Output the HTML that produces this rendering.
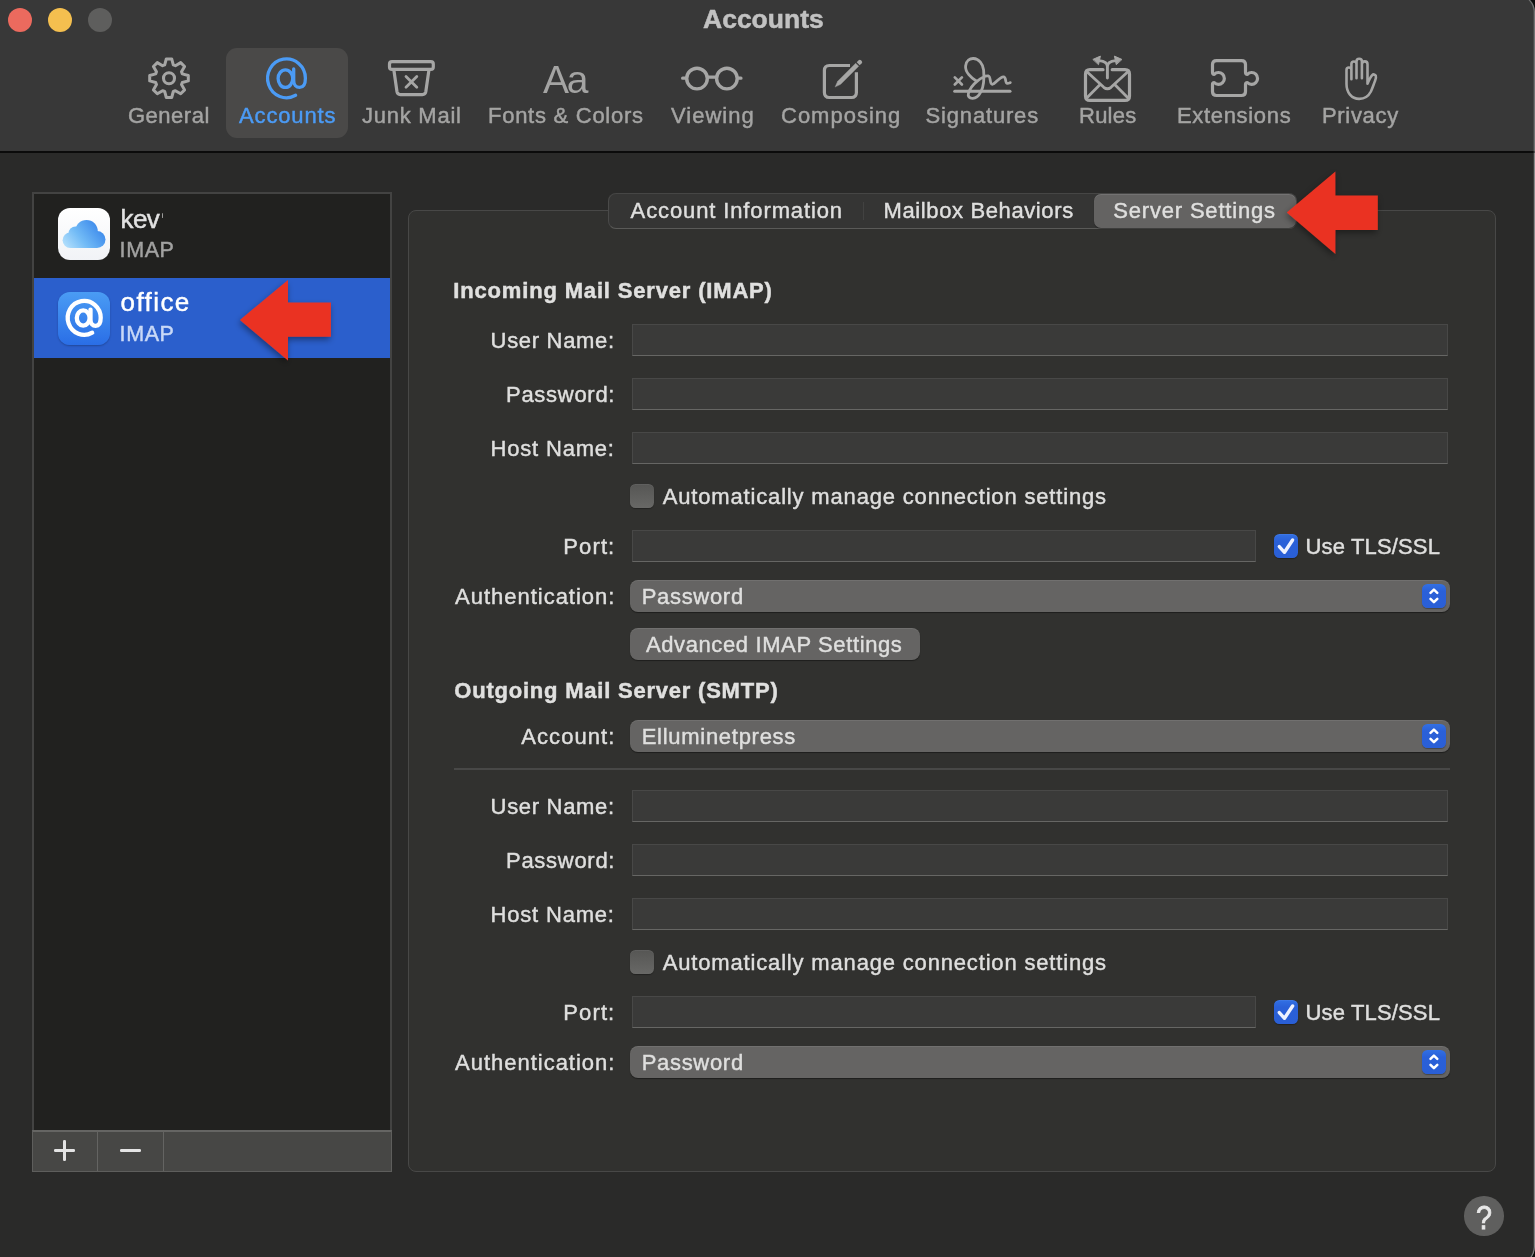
<!DOCTYPE html>
<html><head><meta charset="utf-8"><title>Accounts</title>
<style>
*{box-sizing:border-box;margin:0;padding:0}
html,body{width:1535px;height:1257px;overflow:hidden;background:#0c0c0c}
body{font-family:"Liberation Sans",sans-serif;color:#e4e4e4;font-size:22px;position:relative}
.a{position:absolute}
.t{position:absolute;white-space:pre;-webkit-text-stroke:.45px currentColor}
#win{position:absolute;left:-30px;top:-5px;width:1565px;height:1269px;background:#2a2a29;border-radius:0 17px 17px 0;overflow:hidden;box-shadow:inset -1px 0 0 #555}
#in{will-change:transform;position:absolute;left:30px;top:5px;width:1535px;height:1257px}
#tb{position:absolute;left:0;top:0;width:1535px;height:153px;background:#383838;border-bottom:2px solid #0b0b0b}
.tl{position:absolute;top:8px;width:24px;height:24px;border-radius:50%}
.fld{position:absolute;left:632px;width:816px;height:32px;background:#3a3a39;border:1px solid #484847;border-bottom-color:#666664}
.sel{position:absolute;left:630px;width:820px;height:32px;background:#656463;border-radius:8px;box-shadow:0 1px 1px rgba(0,0,0,.4),inset 0 1px 0 rgba(255,255,255,.08)}
.stp{position:absolute;left:1422px;width:24.4px;height:24.6px;border-radius:5.5px;background:linear-gradient(#3270e4,#2a60d8 30%,#2a5fd6);box-shadow:0 1px 1px rgba(0,0,0,.3)}
.cb{position:absolute;width:24.4px;height:24.4px;border-radius:5.5px;background:linear-gradient(#565654,#686866);box-shadow:0 1px 1px rgba(0,0,0,.3),inset 0 1px 0 rgba(255,255,255,.06)}
.cb.on{background:linear-gradient(#3270e4,#2a60d8 30%,#2a5fd6)}
.ns{-webkit-text-stroke:0}
.tt{-webkit-text-stroke:.5px currentColor}
.q{transform:scaleX(.87);transform-origin:0 0;-webkit-text-stroke:.8px currentColor}
.tb2{-webkit-text-stroke:.45px currentColor}
svg{position:absolute;overflow:visible}
</style></head><body>
<div id="win"><div id="in">
<div id="tb">
 <div class="tl" style="left:8px;background:#ec6a5e"></div>
 <div class="tl" style="left:48px;background:#f4bf4f"></div>
 <div class="tl" style="left:88px;background:#5e5e5d"></div>
 <div class="a" style="left:226px;top:48px;width:122px;height:90px;border-radius:11px;background:#4a4948"></div>
</div>

<!-- left list -->
<div class="a" style="left:32px;top:192px;width:360px;height:980px;background:#21211f;border:2px solid #434342"></div>
<div class="a" style="left:34px;top:278px;width:356px;height:80px;background:#2b5fcc"></div>
<div class="a" style="left:32px;top:1130px;width:360px;height:42px;background:#474745;border:1.6px solid #5e5e5c;border-top:2px solid #656563"></div>
<div class="a" style="left:96.5px;top:1131px;width:1.5px;height:40px;background:#646462"></div>
<div class="a" style="left:162.5px;top:1131px;width:1.5px;height:40px;background:#646462"></div>
<div class="a" style="left:53.8px;top:1149.3px;width:21px;height:2.5px;background:#e4e4e4;border-radius:1.2px"></div>
<div class="a" style="left:63.1px;top:1140px;width:2.5px;height:21px;background:#e4e4e4;border-radius:1.2px"></div>
<div class="a" style="left:119.9px;top:1149.3px;width:21.1px;height:2.5px;background:#e4e4e4;border-radius:1.2px"></div>

<!-- account icons -->
<div class="a" style="left:58px;top:208px;width:52px;height:52px;border-radius:12px;background:linear-gradient(#ffffff,#f1f3f6)"></div>
<div class="a" style="left:58px;top:292px;width:52px;height:53px;border-radius:12px;background:linear-gradient(#4a9cf4,#2a6ee6);box-shadow:0 1px 2px rgba(0,0,0,.25)"></div>

<div class="a" style="left:161.6px;top:213px;width:1.6px;height:4.5px;background:#9a9a99;border-radius:1px"></div>
<!-- panel -->
<div class="a" style="left:408px;top:210px;width:1088px;height:962px;background:#31312f;border:1.5px solid #484847;border-radius:8px"></div>
<!-- tabs -->
<div class="a" style="left:608px;top:193px;width:689px;height:36.4px;background:#353534;border:1.2px solid #4a4a49;border-top-color:#464645;border-bottom-color:#5a5a58;border-radius:8px"></div>
<div class="a" style="left:863px;top:202px;width:1px;height:18px;background:#424241"></div>
<div class="a" style="left:1094px;top:194px;width:201.6px;height:34px;background:#646362;border-radius:7px;box-shadow:0 1px 1px rgba(0,0,0,.35),inset 0 1px 0 rgba(255,255,255,.1)"></div>

<!-- incoming -->
<div class="fld" style="top:324px"></div>
<div class="fld" style="top:378px"></div>
<div class="fld" style="top:432px"></div>
<div class="cb" style="left:629.8px;top:483.8px"></div>
<div class="fld" style="top:530px;width:624px"></div>
<div class="cb on" style="left:1273.9px;top:533.9px"></div>
<div class="sel" style="top:580px"></div><div class="stp" style="top:583.8px"></div>
<div class="sel" style="top:628px;width:290px"></div>
<!-- outgoing -->
<div class="sel" style="top:720px"></div><div class="stp" style="top:723.8px"></div>
<div class="a" style="left:454px;top:768px;width:996px;height:2px;background:#484847"></div>
<div class="fld" style="top:790px"></div>
<div class="fld" style="top:844px"></div>
<div class="fld" style="top:898px"></div>
<div class="cb" style="left:629.8px;top:949.9px"></div>
<div class="fld" style="top:996px;width:624px"></div>
<div class="cb on" style="left:1273.9px;top:999.9px"></div>
<div class="sel" style="top:1046px"></div><div class="stp" style="top:1049.8px"></div>

<!-- help -->
<div class="a" style="left:1464.2px;top:1196.2px;width:39.5px;height:39.5px;border-radius:50%;background:#5f5f5e"></div>

<svg width="1535" height="1257" viewBox="0 0 1535 1257" style="left:0;top:0" fill="none" stroke-linecap="round" stroke-linejoin="round">
<path d="M164.7 64.9 L166.3 58.9 L171.7 58.9 L173.3 64.9 L175.4 65.7 L180.7 62.6 L184.6 66.5 L181.5 71.8 L182.3 73.9 L188.3 75.5 L188.3 80.9 L182.3 82.5 L181.5 84.6 L184.6 89.9 L180.7 93.8 L175.4 90.7 L173.3 91.5 L171.7 97.5 L166.3 97.5 L164.7 91.5 L162.6 90.7 L157.3 93.8 L153.4 89.9 L156.5 84.6 L155.7 82.5 L149.7 80.9 L149.7 75.5 L155.7 73.9 L156.5 71.8 L153.4 66.5 L157.3 62.6 L162.6 65.7Z" stroke="#a6a6a5" stroke-width="3" stroke-linejoin="round"/>
<circle cx="169" cy="78.2" r="5.5" stroke="#a6a6a5" stroke-width="3.1"/>
<path d="M295.6 95.3 A18.9 19.4 0 1 1 305.4 78.2 C305.4 84.5 303.0 87.4 299.6 87.4 C296.3 87.4 293.7 85.0 293.7 80.5 L293.7 68.9" stroke="#4b9bf5" stroke-width="3.3"/><ellipse cx="285.4" cy="78.6" rx="7.3" ry="8.8" stroke="#4b9bf5" stroke-width="3.3"/>
<rect x="389.5" y="61.6" width="43.8" height="7.8" rx="2.5" stroke="#a6a6a5" stroke-width="3.2"/>
<path d="M393.9 70.2 L397 91.8 Q397.5 94.6 400.3 94.6 H422.5 Q425.3 94.6 425.8 91.8 L428.9 70.2" stroke="#a6a6a5" stroke-width="3.2"/>
<path d="M406 76.4 L416.8 87.2 M416.8 76.4 L406 87.2" stroke="#a6a6a5" stroke-width="2.8"/>
<circle cx="697" cy="78.6" r="10.3" stroke="#a6a6a5" stroke-width="3.4"/><circle cx="726.9" cy="78.6" r="10.3" stroke="#a6a6a5" stroke-width="3.4"/>
<path d="M707.6 77.2 H716.1 M682.6 78.2 H686 M737.5 78.2 H741" stroke="#a6a6a5" stroke-width="3.2"/>
<path d="M850 65.5 H829.4 Q824.4 65.5 824.4 70.5 V92.5 Q824.4 97.5 829.4 97.5 H851.4 Q856.4 97.5 856.4 92.5 V72.3" stroke="#a6a6a5" stroke-width="3.2" stroke-linecap="butt"/>
<path d="M835.2 86.7 L837.7 81.2 L855.7 63.2 L858.7 66.2 L840.7 84.2 Z" fill="#a6a6a5" stroke="#a6a6a5" stroke-width=".4"/>
<path d="M856.7 62.2 L858.6 60.3 Q859.8 59.2 861 60.3 L861.7 61 Q862.8 62.2 861.7 63.3 L859.7 65.2 Z" fill="#a6a6a5" stroke="none"/>
<path d="M954.7 91.3 H1010 " stroke="#a6a6a5" stroke-width="3"/>
<path d="M954.8 77.4 L961.9 84.5 M961.9 77.4 L954.8 84.5" stroke="#a6a6a5" stroke-width="2.7"/>
<path d="M977 81.5 C971 78 965 72 965.6 66 C966.2 60.5 970 58.3 973.5 58.5 C979 58.8 983 64 983.6 70 C984.2 77 984 86 981 91.7 C978.5 96.5 975.5 98.5 972.5 98.4 C969.5 98.3 967.6 96.5 968.4 93.5 C969.5 89.5 973 84.5 977 81.3 C980.5 78.5 985.5 75.5 988.5 76 C991 76.5 989.5 84.5 992.3 84.3 C995.5 84 999 77 1003.5 76.8 C1006.5 76.7 1004.8 83.2 1007.3 83.3 C1008.6 83.3 1009.5 82.9 1010.3 82.6" stroke="#a6a6a5" stroke-width="2.8"/>
<path d="M1103 69.7 H1090 Q1085.5 69.7 1085.5 74.2 V95.9 Q1085.5 100.4 1090 100.4 H1125 Q1129.5 100.4 1129.5 95.9 V74.2 Q1129.5 69.7 1125 69.7 H1112.2" stroke="#a6a6a5" stroke-width="3.2"/>
<path d="M1087.2 72 L1103.8 87.3 Q1107.4 90.3 1111 87.3 L1127.6 72 M1087.2 97.6 L1099.6 85 M1127.6 97.6 L1115.2 85" stroke="#a6a6a5" stroke-width="2.8"/>
<path d="M1107.4 78 V66.5 C1107.4 62.5 1103.5 61 1099 60.6 M1107.4 66.5 C1107.4 62.5 1111.3 61 1115.8 60.6" stroke="#a6a6a5" stroke-width="2.9"/>
<path d="M1093.2 59.3 L1100.4 56.1 L1098.6 64.3 Z M1121.6 59.3 L1114.4 56.1 L1116.2 64.3 Z" fill="#a6a6a5" stroke="#a6a6a5" stroke-width="1"/>
<path d="M1212.5 72.3 V64.6 Q1212.5 60.6 1216.5 60.6 H1241.5 Q1245.5 60.6 1245.5 64.6 V72.3 Q1245.5 74.3 1247.4 74.3 A5.9 5.9 0 1 1 1247.4 82.5 Q1245.5 82.5 1245.5 84.5 V91.5 Q1245.5 95.5 1241.5 95.5 H1216.5 Q1212.5 95.5 1212.5 91.5 V84.5 Q1212.5 82.5 1214.2 82.5 A5.9 5.9 0 1 0 1214.2 74.3 Q1212.5 74.3 1212.5 72.3 Z" stroke="#a6a6a5" stroke-width="3.2"/>
<path d="M1346.5 84 V70 a2.45 2.45 0 0 1 4.9 0 M1351.4 79.3 V64 a2.55 2.55 0 0 1 5.1 0 V78.3 M1356.5 64 V61.4 a2.7 2.7 0 0 1 5.4 0 V78.3 M1361.9 64.2 a2.8 2.8 0 0 1 5.6 0 V83.7 C1368.8 80.5 1370.5 77 1372 75.3 C1373.3 73.9 1375.2 74.2 1375.8 75.8 C1376.3 77.2 1375.8 79 1375 81 C1373.6 84.5 1372.5 88 1370.9 91.5 C1368.8 95.6 1364.5 98.9 1359.2 98.9 C1351.5 98.9 1346.5 92.5 1346.5 84" stroke="#a6a6a5" stroke-width="2.6"/>
<defs><linearGradient id="cg" x1="0" y1="0" x2="1" y2="1"><stop offset="0" stop-color="#8fd0fb"/><stop offset="1" stop-color="#2f7fe6"/></linearGradient><linearGradient id="cg2" x1="0" y1="1" x2="1" y2="0"><stop offset="0" stop-color="#9ad6fb"/><stop offset=".6" stop-color="#4d9cf0"/><stop offset="1" stop-color="#2c78e4"/></linearGradient></defs>
<defs><linearGradient id="cg3" gradientUnits="userSpaceOnUse" x1="64" y1="250" x2="100" y2="222"><stop offset="0" stop-color="#bde5fd"/><stop offset=".45" stop-color="#72bbf6"/><stop offset="1" stop-color="#3684ea"/></linearGradient></defs>
<g fill="url(#cg3)" stroke="none"><circle cx="70.3" cy="240.3" r="7.7"/><circle cx="75.5" cy="233.5" r="7"/><circle cx="86.5" cy="231.3" r="11.3"/><circle cx="97" cy="239.6" r="8.5"/><rect x="70.3" y="236" width="26.7" height="12"/></g>
<path d="M92.2 332.7 A16.5 17.0 0 1 1 100.7 317.7 C100.7 323.2 98.6 325.8 95.7 325.8 C92.8 325.8 90.5 323.6 90.5 319.7 L90.5 309.6" stroke="#ffffff" stroke-width="4.3"/><ellipse cx="83.2" cy="318.0" rx="6.4" ry="7.7" stroke="#ffffff" stroke-width="4.3"/>
<path d="M1279.3 546.6 L1284.5 552.3 L1292.6 540" stroke="#eef2ff" stroke-width="3.4"/>
<path d="M1279.3 1012.6 L1284.5 1018.3 L1292.6 1006" stroke="#eef2ff" stroke-width="3.4"/>
<path d="M1430.5 592.8 L1433.9 589.6 L1437.3 592.8 M1430.5 598.8 L1433.9 602.2 L1437.3 598.8" stroke="#fff" stroke-width="2.5"/>
<path d="M1430.5 732.8 L1433.9 729.6 L1437.3 732.8 M1430.5 738.8 L1433.9 742.2 L1437.3 738.8" stroke="#fff" stroke-width="2.5"/>
<path d="M1430.5 1058.8 L1433.9 1055.6 L1437.3 1058.8 M1430.5 1064.8 L1433.9 1068.2 L1437.3 1064.8" stroke="#fff" stroke-width="2.5"/>
<defs><filter id="sh" x="-20%" y="-20%" width="140%" height="150%"><feDropShadow dx="-1" dy="3" stdDeviation="3" flood-color="#000" flood-opacity=".4"/></filter></defs>
<path d="M239.9 319.9 L288 279.9 V302.6 H330.9 V336.8 H288 V360.4 Z" fill="#ea3323" stroke="none" filter="url(#sh)"/>
<path d="M1286.8 212.6 L1335.4 171.4 V195.4 H1377.8 V230 H1335.4 V254.1 Z" fill="#ea3323" stroke="none" filter="url(#sh)"/>
</svg>
<div class="t tt" style="left:703.0px;top:2.0px;font-size:26.5px;line-height:34px;letter-spacing:0.00px;color:#c2c2c2;font-weight:700">Accounts</div>
<div class="t tb2" style="left:128.0px;top:101.4px;font-size:22px;line-height:29px;letter-spacing:0.50px;color:#a4a4a3">General</div>
<div class="t tb2" style="left:239.0px;top:101.4px;font-size:22px;line-height:29px;letter-spacing:0.86px;color:#4b9bf5">Accounts</div>
<div class="t tb2" style="left:362.0px;top:101.4px;font-size:22px;line-height:29px;letter-spacing:0.75px;color:#a4a4a3">Junk Mail</div>
<div class="t tb2" style="left:488.0px;top:101.4px;font-size:22px;line-height:29px;letter-spacing:0.73px;color:#a4a4a3">Fonts &amp; Colors</div>
<div class="t tb2" style="left:671.0px;top:101.4px;font-size:22px;line-height:29px;letter-spacing:1.00px;color:#a4a4a3">Viewing</div>
<div class="t tb2" style="left:781.0px;top:101.4px;font-size:22px;line-height:29px;letter-spacing:1.00px;color:#a4a4a3">Composing</div>
<div class="t tb2" style="left:925.6px;top:101.4px;font-size:22px;line-height:29px;letter-spacing:0.82px;color:#a4a4a3">Signatures</div>
<div class="t tb2" style="left:1079.0px;top:101.4px;font-size:22px;line-height:29px;letter-spacing:0.25px;color:#a4a4a3">Rules</div>
<div class="t tb2" style="left:1177.0px;top:101.4px;font-size:22px;line-height:29px;letter-spacing:0.67px;color:#a4a4a3">Extensions</div>
<div class="t tb2" style="left:1322.0px;top:101.4px;font-size:22px;line-height:29px;letter-spacing:0.67px;color:#a4a4a3">Privacy</div>
<div class="t ns" style="left:543.0px;top:53.7px;font-size:39px;line-height:51px;letter-spacing:-2.30px;color:#a4a4a3">Aa</div>
<div class="t" style="left:120.6px;top:202.0px;font-size:26px;line-height:34px;letter-spacing:-0.70px;color:#e2e2e2">kev</div>
<div class="t" style="left:119.6px;top:235.9px;font-size:21.5px;line-height:28px;letter-spacing:0.60px;color:#a2a2a1">IMAP</div>
<div class="t" style="left:120.5px;top:285.4px;font-size:26px;line-height:34px;letter-spacing:1.42px;color:#ffffff">office</div>
<div class="t" style="left:119.6px;top:319.6px;font-size:21.5px;line-height:28px;letter-spacing:0.60px;color:#c9d9f7">IMAP</div>
<div class="t" style="left:630.6px;top:196.1px;font-size:22px;line-height:29px;letter-spacing:0.88px;color:#dfdfde">Account Information</div>
<div class="t" style="left:883.5px;top:196.1px;font-size:22px;line-height:29px;letter-spacing:0.62px;color:#dfdfde">Mailbox Behaviors</div>
<div class="t" style="left:1113.3px;top:196.1px;font-size:22px;line-height:29px;letter-spacing:0.81px;color:#dfdfde">Server Settings</div>
<div class="t" style="left:453.3px;top:275.9px;font-size:22px;line-height:29px;letter-spacing:0.83px;color:#e0e0df;font-weight:700">Incoming Mail Server (IMAP)</div>
<div class="t" style="left:490.6px;top:325.5px;font-size:22px;line-height:29px;letter-spacing:0.69px;color:#dfdfde">User Name:</div>
<div class="t" style="left:506.0px;top:379.5px;font-size:22px;line-height:29px;letter-spacing:0.72px;color:#dfdfde">Password:</div>
<div class="t" style="left:490.6px;top:433.7px;font-size:22px;line-height:29px;letter-spacing:0.80px;color:#dfdfde">Host Name:</div>
<div class="t" style="left:662.8px;top:481.8px;font-size:22px;line-height:29px;letter-spacing:0.83px;color:#dfdfde">Automatically manage connection settings</div>
<div class="t" style="left:563.3px;top:531.8px;font-size:22px;line-height:29px;letter-spacing:1.12px;color:#dfdfde">Port:</div>
<div class="t" style="left:1305.5px;top:531.5px;font-size:22px;line-height:29px;letter-spacing:0.15px;color:#dfdfde">Use TLS/SSL</div>
<div class="t" style="left:455.0px;top:581.6px;font-size:22px;line-height:29px;letter-spacing:0.99px;color:#dfdfde">Authentication:</div>
<div class="t" style="left:641.7px;top:581.6px;font-size:22px;line-height:29px;letter-spacing:0.69px;color:#dfdfde">Password</div>
<div class="t" style="left:645.9px;top:629.5px;font-size:22px;line-height:29px;letter-spacing:0.62px;color:#dfdfde">Advanced IMAP Settings</div>
<div class="t" style="left:454.3px;top:676.0px;font-size:22px;line-height:29px;letter-spacing:0.78px;color:#e0e0df;font-weight:700">Outgoing Mail Server (SMTP)</div>
<div class="t" style="left:521.3px;top:721.6px;font-size:22px;line-height:29px;letter-spacing:1.07px;color:#dfdfde">Account:</div>
<div class="t" style="left:641.7px;top:721.6px;font-size:22px;line-height:29px;letter-spacing:0.72px;color:#dfdfde">Elluminetpress</div>
<div class="t" style="left:490.6px;top:791.7px;font-size:22px;line-height:29px;letter-spacing:0.69px;color:#dfdfde">User Name:</div>
<div class="t" style="left:506.0px;top:845.7px;font-size:22px;line-height:29px;letter-spacing:0.72px;color:#dfdfde">Password:</div>
<div class="t" style="left:490.6px;top:899.9px;font-size:22px;line-height:29px;letter-spacing:0.80px;color:#dfdfde">Host Name:</div>
<div class="t" style="left:662.8px;top:948.0px;font-size:22px;line-height:29px;letter-spacing:0.83px;color:#dfdfde">Automatically manage connection settings</div>
<div class="t" style="left:563.3px;top:998.0px;font-size:22px;line-height:29px;letter-spacing:1.12px;color:#dfdfde">Port:</div>
<div class="t" style="left:1305.5px;top:997.7px;font-size:22px;line-height:29px;letter-spacing:0.15px;color:#dfdfde">Use TLS/SSL</div>
<div class="t" style="left:455.0px;top:1047.8px;font-size:22px;line-height:29px;letter-spacing:0.99px;color:#dfdfde">Authentication:</div>
<div class="t" style="left:641.7px;top:1047.8px;font-size:22px;line-height:29px;letter-spacing:0.69px;color:#dfdfde">Password</div>
<div class="t q" style="left:1475.7px;top:1195.7px;font-size:33px;line-height:43px;letter-spacing:0.00px;color:#e8e8e8">?</div>
</div>
<div class="a" style="left:0;top:0;width:1565px;height:1269px;border-radius:0 17px 17px 0;box-shadow:inset -1.5px 0 0 rgba(255,255,255,.2),inset 0 0 0 1px rgba(255,255,255,.12);pointer-events:none"></div>
</div>
</body></html>
